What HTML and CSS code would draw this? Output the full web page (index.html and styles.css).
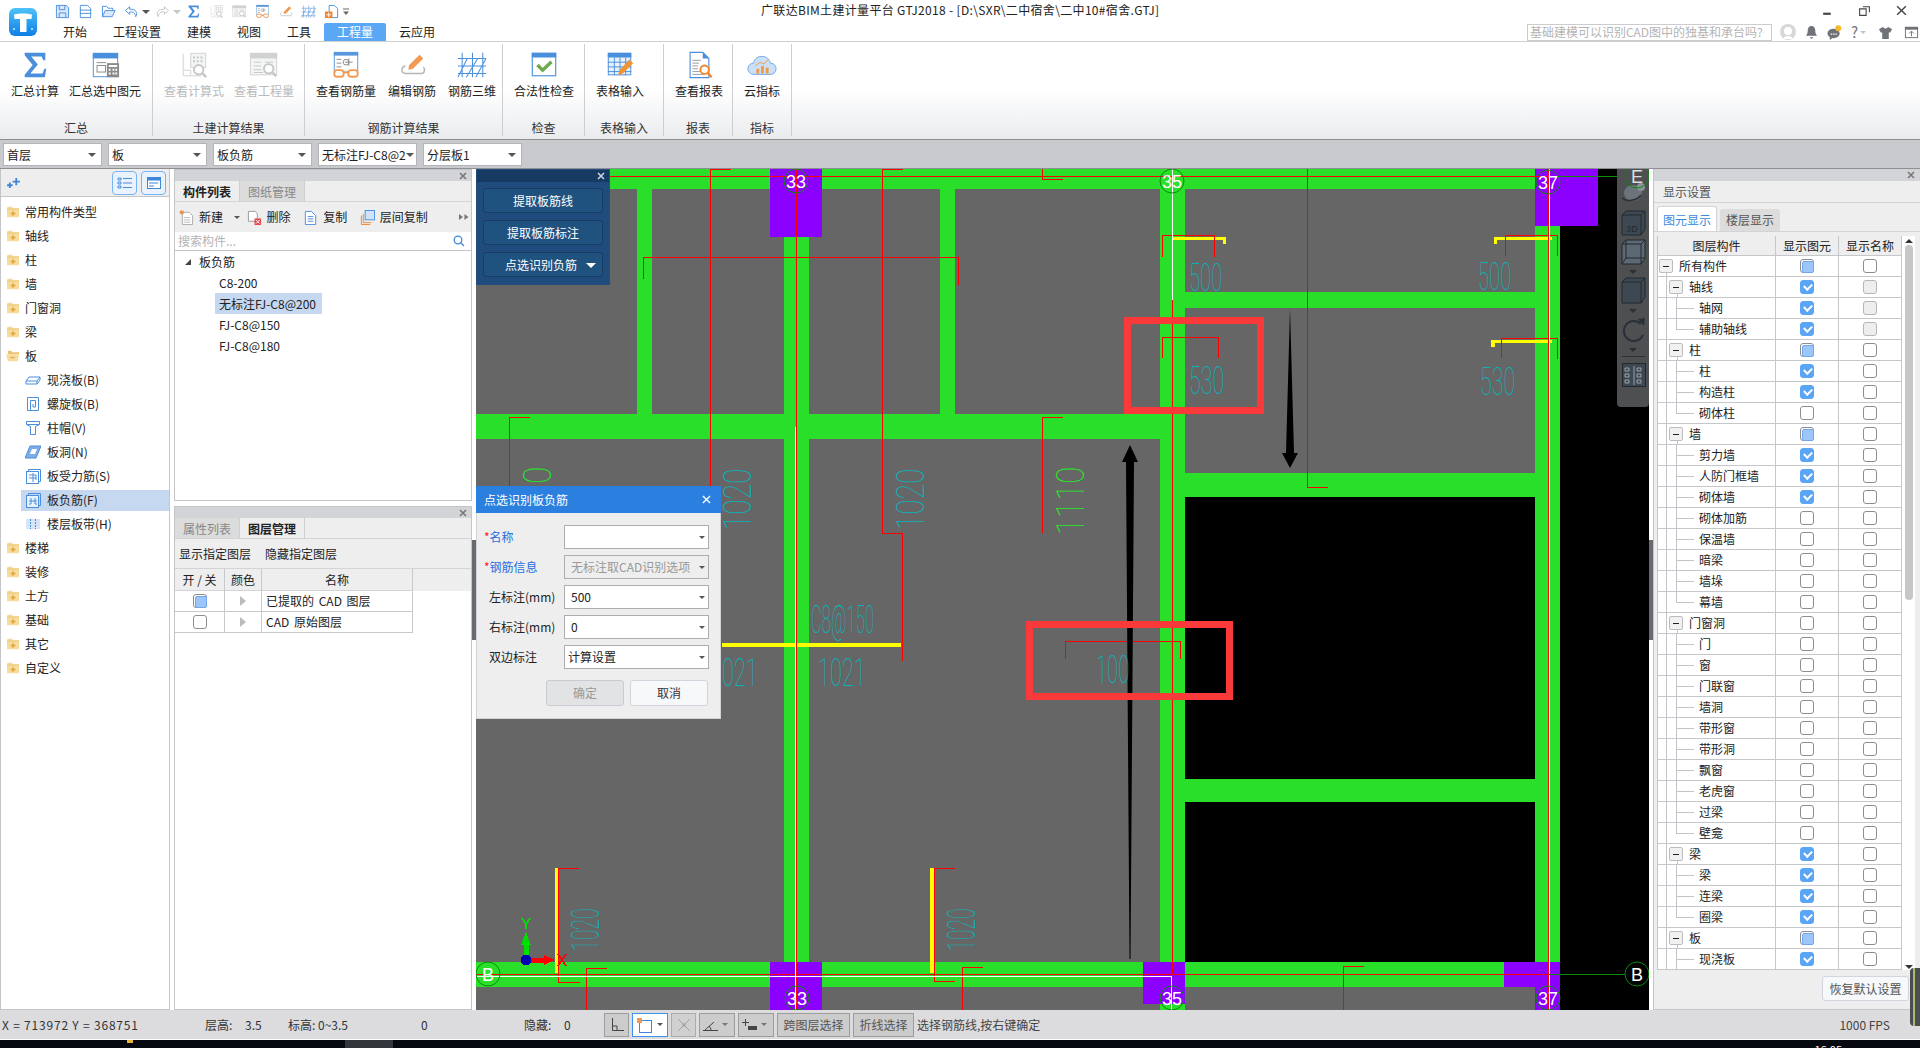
FILE: index.html
```html
<!DOCTYPE html>
<html lang="zh-CN">
<head>
<meta charset="utf-8">
<title>广联达BIM土建计量平台 GTJ2018</title>
<link rel="stylesheet" href="styles.css">
</head>
<body>
<svg class="defs" xmlns="http://www.w3.org/2000/svg">
  <symbol id="s-sigma" viewBox="0 0 32 32"><path d="M5 3H27V11H25L23 7H12L19 15.500L11 25H24L26 20H28L26.500 29H5V26.500L13.500 16L5 5.500Z" fill="#4a8fdc"/></symbol>
  <symbol id="s-sel" viewBox="0 0 32 32"><rect x="3.500" y="4.500" width="26" height="24" fill="#fff" stroke="#4a8fdc"/><rect x="3" y="3" width="27" height="6" fill="#4a8fdc"/><rect x="7.500" y="16.500" width="9" height="7" fill="none" stroke="#8a8a8a"/><rect x="7" y="13" width="10" height="1" fill="#8a8a8a"/><rect x="18" y="14" width="13" height="15" fill="#8a8a8a"/><path d="M20 16h9v2h-9zM20 20h2v2h-2zM24 20h2v2h-2zM27 20h2v2h-2zM20 24h2v2h-2zM24 24h2v2h-2zM27 24h2v2h-2z" fill="#fff"/></symbol>
  <symbol id="s-formula" viewBox="0 0 32 32"><path d="M4.500 4V27.500H24" fill="none" stroke="#cfd1d3"/><path d="M4.500 21.500H12.500V27" fill="none" stroke="#cfd1d3"/><rect x="12.500" y="3.500" width="16" height="15" fill="#f4f5f5" stroke="#cfd1d3"/><path d="M15 7h2v2h-2zM19 7h2v2h-2zM23 7h2v2h-2zM15 11h2v2h-2zM19 11h2v2h-2zM23 11h2v2h-2z" fill="#c4c6c8"/><circle cx="21" cy="21" r="5" fill="#fff" stroke="#c4c6c8" stroke-width="2"/><path d="M25 25L29 29" stroke="#c4c6c8" stroke-width="2.500"/></symbol>
  <symbol id="s-qty" viewBox="0 0 32 32"><rect x="1.500" y="4.500" width="28" height="22" fill="#f4f5f5" stroke="#cfd1d3"/><rect x="1" y="3" width="29" height="6" fill="#cfd1d3"/><path d="M5 13H13M17 13H26M5 17H13M5 21H13M5 24H15" stroke="#c4c6c8"/><circle cx="21" cy="20" r="5" fill="#fff" stroke="#c4c6c8" stroke-width="2"/><path d="M25 24L29 28" stroke="#c4c6c8" stroke-width="2.500"/></symbol>
  <symbol id="s-glasses" viewBox="0 0 32 32"><rect x="3.500" y="3.500" width="25" height="20" fill="#fff" stroke="#5a96dc"/><rect x="3" y="2" width="26" height="4" fill="#5a96dc"/><path d="M6 10H11M6 14H11M6 18H11M15 13H23M19 9V17" stroke="#888"/><circle cx="16" cy="13" r="3" fill="none" stroke="#888"/><rect x="3.500" y="21.500" width="10" height="7" rx="3" fill="#fff" stroke="#f29a53" stroke-width="2"/><rect x="18.500" y="21.500" width="10" height="7" rx="3" fill="#fff" stroke="#f29a53" stroke-width="2"/><path d="M13 24H19" stroke="#f29a53" stroke-width="2"/></symbol>
  <symbol id="s-pen" viewBox="0 0 32 32"><path d="M9 17C4 18 4 25 9 25H26C30 25 30 20 28 18" fill="none" stroke="#b4b6b8" stroke-width="1.500"/><path d="M24 5L28 9L17 20L12 21L13 16Z" fill="#f29a53"/></symbol>
  <symbol id="s-grid" viewBox="0 0 32 32"><path d="M5.500 3V29M16.500 3V29M27.500 3V29M1 9H31M1 17H31M1 25H31M1 29L11 9M10 29L22 9M20 29L31 9" fill="none" stroke="#4a8fdc" stroke-width="1.100"/></symbol>
  <symbol id="s-check" viewBox="0 0 32 32"><rect x="3.500" y="3.500" width="25" height="24" fill="#fff" stroke="#4a8fdc" stroke-width="1.200"/><rect x="3" y="3" width="26" height="5" fill="#4a8fdc"/><path d="M9 16L14.500 21.500L24 12.500" fill="none" stroke="#6ea94b" stroke-width="3.500"/></symbol>
  <symbol id="s-table" viewBox="0 0 32 32"><rect x="3.500" y="3.500" width="24" height="23" fill="#e8f0fa" stroke="#4a8fdc"/><rect x="3" y="3" width="25" height="5" fill="#4a8fdc"/><path d="M3 13H28M3 18H28M3 23H28M10 8V27M16 8V27M22 8V27" stroke="#4a8fdc"/><path d="M26 10L30 14L19 25L14 27L15.500 21.500Z" fill="#f09331"/></symbol>
  <symbol id="s-report" viewBox="0 0 32 32"><path d="M6.500 2.500H20L26.500 9V29.500H6.500Z" fill="#fff" stroke="#4a8fdc" stroke-width="1.200"/><path d="M20 2L27 9H20Z" fill="#4a8fdc"/><path d="M9 11H18M9 14H16M9 17H15M9 20H15M9 23H17M9 26H21" stroke="#999"/><circle cx="22" cy="21" r="4.500" fill="#fff" stroke="#f0852d" stroke-width="2"/><path d="M25.500 24.500L29.500 29" stroke="#f0852d" stroke-width="2.500"/></symbol>
  <symbol id="s-cloud" viewBox="0 0 32 32"><path d="M8 26C3 26 1 23 1 20C1 16 4 14 7 14C8 9 12 6 17 7C21 7 24 10 25 14C29 14 31 17 31 20C31 24 28 26 25 26Z" fill="#c9e0f7" stroke="#6ea6e0"/><path d="M10 20h3v5h-3zM15 17h3v8h-3zM20 19h3v6h-3z" fill="#f09a45"/><path d="M9 17L14 13L18 15L23 10" fill="none" stroke="#f09a45"/></symbol>
  <symbol id="s-folder" viewBox="0 0 16 14"><path d="M1 2.500C1 1.500 2 1 3 1H7L8 2.500H15V13H1Z" fill="#f6dc9d"/><path d="M1 3H15V4H1Z" fill="#e9c272"/><path d="M7 6h2v2h2v1.500H9v2H7v-2H5V8h2z" fill="#eaa640"/></symbol>
  <symbol id="s-folder-open" viewBox="0 0 16 14"><path d="M2 1H6L7 2.500H15V5H2Z" fill="#e9c272"/><path d="M0 5H15L13.500 13H2Z" fill="#f6dc9d"/><path d="M5 8H10V9.500H5Z" fill="#e1a84c"/></symbol>
  <symbol id="s-x" viewBox="0 0 8 8"><path d="M1 1L7 7M7 1L1 7"/></symbol>
</svg>

<div class="app">
  <header class="top">
    <div class="logo-cell">
      <svg class="logo" viewBox="0 0 28 28"><defs><linearGradient id="lg" x1="0" y1="0" x2="0" y2="1"><stop offset="0" stop-color="#4ec2f8"/><stop offset="1" stop-color="#0f7fe6"/></linearGradient></defs><rect width="28" height="28" rx="6" fill="url(#lg)"/><path d="M5 6.500C9 5 19 5 23 6.500L22.500 11H17.500V24H11V11H5.500Z" fill="#fff"/><path d="M4 20h2v2H4zM22 20h2v2h-2z" fill="#9bdcff"/></svg>
    </div>
    <div class="top-main">
      <div class="title-row">
        <div class="qat">
          <svg class="qi" viewBox="0 0 16 16"><path d="M1.500 1.500H12L14.500 4V14.500H1.500Z" fill="#d9e9fb" stroke="#4a8fdc"/><path d="M4.500 2V6H10.500V2M4.500 14V9.500H11.500V14" fill="none" stroke="#4a8fdc"/></svg>
          <svg class="qi" viewBox="0 0 16 16"><path d="M2.500 1.500H10L13.500 5V14.500H2.500Z" fill="#fff" stroke="#4a8fdc"/><path d="M2 6.500H14M2 10H14" stroke="#4a8fdc"/></svg>
          <svg class="qi" viewBox="0 0 16 16"><path d="M1.500 13.500V2.500H6L7.500 4.500H12.500V7" fill="#fff" stroke="#4a8fdc"/><path d="M1.500 13.500L4.500 7H15L12 13.500Z" fill="#d9e9fb" stroke="#4a8fdc"/></svg>
          <svg class="qi" viewBox="0 0 16 16"><path d="M6 3L1.500 7L6 11V8.500C10 8 12 10 12.500 13.500C15 9 13 5.500 6 5.500Z" fill="#fff" stroke="#4a8fdc"/></svg>
          <i class="caret dark"></i>
          <svg class="qi" viewBox="0 0 16 16"><path d="M10 3L14.500 7L10 11V8.500C6 8 4 10 3.500 13.500C1 9 3 5.500 10 5.500Z" fill="#fff" stroke="#c2c4c6"/></svg>
          <i class="caret pale"></i>
          <svg class="qi"><use href="#s-sigma"/></svg>
          <svg class="qi"><use href="#s-formula"/></svg>
          <svg class="qi"><use href="#s-qty"/></svg>
          <svg class="qi"><use href="#s-glasses"/></svg>
          <svg class="qi"><use href="#s-pen"/></svg>
          <svg class="qi"><use href="#s-grid"/></svg>
          <svg class="qi" viewBox="0 0 16 16"><path d="M5.500 1.500H11L14.500 5V14.500H5.500Z" fill="#fff" stroke="#4a8fdc"/><rect x="1" y="8" width="8" height="7" fill="#f0852d"/><path d="M5 9V14M2.500 11.500H7.500" stroke="#fff"/></svg>
          <svg class="qmore" viewBox="0 0 8 8"><path d="M1 1H7" stroke="#666"/><path d="M1 3.500H7L4 7Z" fill="#666"/></svg>
        </div>
        <div class="app-title">广联达BIM土建计量平台 GTJ2018 - [D:\SXR\二中宿舍\二中10#宿舍.GTJ]</div>
        <div class="winctl">
          <svg class="wc" viewBox="0 0 12 12"><path d="M2 9H9" stroke="#444" stroke-width="2"/></svg>
          <svg class="wc" viewBox="0 0 12 12"><path d="M4.500 2.500H10.500V7.500M1.500 4.500H7.500V10.500H1.500Z" fill="none" stroke="#444"/></svg>
          <svg class="wc" viewBox="0 0 12 12"><path d="M2 2L10 10M10 2L2 10" stroke="#444" stroke-width="1.300"/></svg>
        </div>
      </div>
      <div class="tab-row">
        <nav class="tabs">
          <span class="tab">开始</span><span class="tab">工程设置</span><span class="tab">建模</span><span class="tab">视图</span><span class="tab">工具</span><span class="tab active">工程量</span><span class="tab">云应用</span>
        </nav>
        <div class="user-tools">
          <div class="search"><span class="ph">基础建模可以识别CAD图中的独基和承台吗?</span>
            <svg class="sico" viewBox="0 0 12 12"><circle cx="5" cy="5" r="3.800" fill="none" stroke="#bbb"/><path d="M8 8L11 11" stroke="#bbb"/></svg></div>
          <svg class="ut avatar" viewBox="0 0 16 16"><circle cx="8" cy="8" r="8" fill="#d6d8da"/><circle cx="8" cy="7" r="4" fill="#fff"/><path d="M3 15C4 11 12 11 13 15" fill="#fff"/></svg>
          <svg class="ut" viewBox="0 0 16 16"><path d="M8 1C5 1 4 3.500 4 6C4 9 3 10 2 11.500H14C13 10 12 9 12 6C12 3.500 11 1 8 1ZM6 13H10L8 15Z" fill="#6f7377"/></svg>
          <svg class="ut" viewBox="0 0 16 16"><ellipse cx="7" cy="9" rx="6.500" ry="5" fill="#6f7377"/><path d="M3 12L3 16L7 13Z" fill="#6f7377"/><path d="M4 9h1.500v1.500H4zM6.500 9H8v1.500H6.500zM9 9h1.500v1.500H9z" fill="#fff"/><circle cx="12" cy="3.500" r="3.200" fill="#f5b82e"/></svg>
          <span class="help">?</span><i class="caret pale"></i>
          <svg class="ut shirt" viewBox="0 0 16 16"><path d="M5 2L1 4.500L3 8H4.500V15H11.500V8H13L15 4.500L11 2L8 4Z" fill="#6f7377"/></svg>
          <svg class="ut" viewBox="0 0 16 16"><rect x="1.500" y="2.500" width="13" height="11" fill="#fff" stroke="#6f7377"/><rect x="1" y="2" width="14" height="3" fill="#6f7377"/><path d="M8 12V7M5.500 9L8 6.500L10.500 9" fill="none" stroke="#6f7377"/></svg>
        </div>
      </div>
    </div>
  </header>

  <section class="ribbon">
    <div class="grp g1"><div class="items">
      <div class="item"><svg class="ric"><use href="#s-sigma"/></svg><span>汇总计算</span></div>
      <div class="item"><svg class="ric"><use href="#s-sel"/></svg><span>汇总选中图元</span></div>
    </div><div class="gl">汇总</div></div>
    <div class="grp g2"><div class="items">
      <div class="item off"><svg class="ric"><use href="#s-formula"/></svg><span>查看计算式</span></div>
      <div class="item off"><svg class="ric"><use href="#s-qty"/></svg><span>查看工程量</span></div>
    </div><div class="gl">土建计算结果</div></div>
    <div class="grp g3"><div class="items wide">
      <div class="item"><svg class="ric"><use href="#s-glasses"/></svg><span>查看钢筋量</span></div>
      <div class="item"><svg class="ric"><use href="#s-pen"/></svg><span>编辑钢筋</span></div>
      <div class="item"><svg class="ric"><use href="#s-grid"/></svg><span>钢筋三维</span></div>
    </div><div class="gl">钢筋计算结果</div></div>
    <div class="grp g4"><div class="items">
      <div class="item"><svg class="ric"><use href="#s-check"/></svg><span>合法性检查</span></div>
    </div><div class="gl">检查</div></div>
    <div class="grp g5"><div class="items">
      <div class="item"><svg class="ric"><use href="#s-table"/></svg><span>表格输入</span></div>
    </div><div class="gl">表格输入</div></div>
    <div class="grp g6"><div class="items">
      <div class="item"><svg class="ric"><use href="#s-report"/></svg><span>查看报表</span></div>
    </div><div class="gl">报表</div></div>
    <div class="grp g7"><div class="items">
      <div class="item"><svg class="ric"><use href="#s-cloud"/></svg><span>云指标</span></div>
    </div><div class="gl">指标</div></div>
  </section>

  <section class="combos">
    <div class="combo"><span>首层</span><i class="caret dark"></i></div>
    <div class="combo"><span>板</span><i class="caret dark"></i></div>
    <div class="combo"><span>板负筋</span><i class="caret dark"></i></div>
    <div class="combo"><span class="clip">无标注FJ-C8@2</span><i class="caret dark"></i></div>
    <div class="combo"><span>分层板1</span><i class="caret dark"></i></div>
  </section>

  <main class="main">
    <aside class="side">
      <div class="side-bar">
        <svg class="spark" viewBox="0 0 14 12"><path d="M9 1h2v3h3v2h-3v3H9V6H6V4h3zM2 6h2v2h2v2H4v2H2v-2H0V8h2z" fill="#3d86d8"/></svg>
        <span class="vbtn"><svg viewBox="0 0 16 16"><path d="M1 3h3v2H1zM1 7h3v2H1zM1 11h3v2H1z" fill="none" stroke="#4a8fdc"/><path d="M6 3.500H15M6 8H15M6 12.500H15" stroke="#4a8fdc"/></svg></span>
        <span class="vbtn"><svg viewBox="0 0 16 16"><rect x="1.500" y="2.500" width="13" height="11" fill="#fff" stroke="#3d86d8"/><rect x="1" y="2" width="14" height="3.500" fill="#3d86d8"/><path d="M3 8H12M3 11H8" stroke="#3d86d8"/></svg></span>
      </div>
      <div class="side-tree">
        <div class="nd"><svg class="fo"><use href="#s-folder"/></svg>常用构件类型</div>
        <div class="nd"><svg class="fo"><use href="#s-folder"/></svg>轴线</div>
        <div class="nd"><svg class="fo"><use href="#s-folder"/></svg>柱</div>
        <div class="nd"><svg class="fo"><use href="#s-folder"/></svg>墙</div>
        <div class="nd"><svg class="fo"><use href="#s-folder"/></svg>门窗洞</div>
        <div class="nd"><svg class="fo"><use href="#s-folder"/></svg>梁</div>
        <div class="nd"><svg class="fo"><use href="#s-folder-open"/></svg>板</div>
        <div class="nd sub"><svg class="ti" viewBox="0 0 16 16"><path d="M1 9L4 5H15L12 9ZM1 9V12H12V9M12 12L15 8V5" fill="#fff" stroke="#4a8fdc"/></svg>现浇板(B)</div>
        <div class="nd sub"><svg class="ti" viewBox="0 0 16 16"><path d="M2.500 1.500H13.500V14.500H2.500ZM5.500 14V4.500H10.500V11H8V8" fill="none" stroke="#4a8fdc"/></svg>螺旋板(B)</div>
        <div class="nd sub"><svg class="ti" viewBox="0 0 16 16"><path d="M1.500 1.500H14.500V4.500L10.500 6.500V14.500H5.500V6.500L1.500 4.500Z" fill="none" stroke="#4a8fdc"/><path d="M2 4.500H14" stroke="#4a8fdc"/></svg>柱帽(V)</div>
        <div class="nd sub"><svg class="ti" viewBox="0 0 16 16"><path d="M5 2H16L11 14H0Z" fill="#7eaee6" stroke="#4a8fdc"/><path d="M7 5H12L10 10H5Z" fill="#fff"/></svg>板洞(N)</div>
        <div class="nd sub"><svg class="ti" viewBox="0 0 16 16"><rect x="1.500" y="3.500" width="12" height="12" fill="#fff" stroke="#4a8fdc"/><path d="M3.500 3V1.500H15.500V13.500H14M4 7H11V12M4 10H11M8 5V14" fill="none" stroke="#4a8fdc"/></svg>板受力筋(S)</div>
        <div class="nd sub sel"><svg class="ti" viewBox="0 0 16 16"><rect x="1.500" y="3.500" width="12" height="12" fill="#e8f0fa" stroke="#4a8fdc"/><path d="M3.500 3V1.500H15.500V13.500H14M6 6V12H4M10 6V12H12M4 9H12" fill="none" stroke="#4a8fdc"/></svg>板负筋(F)</div>
        <div class="nd sub"><svg class="ti" viewBox="0 0 16 16"><rect x="1" y="3" width="14" height="10" fill="#d6e5f7"/><path d="M5.500 3V13M10.500 3V13" stroke="#4a8fdc" stroke-dasharray="2 1"/></svg>楼层板带(H)</div>
        <div class="nd"><svg class="fo"><use href="#s-folder"/></svg>楼梯</div>
        <div class="nd"><svg class="fo"><use href="#s-folder"/></svg>装修</div>
        <div class="nd"><svg class="fo"><use href="#s-folder"/></svg>土方</div>
        <div class="nd"><svg class="fo"><use href="#s-folder"/></svg>基础</div>
        <div class="nd"><svg class="fo"><use href="#s-folder"/></svg>其它</div>
        <div class="nd"><svg class="fo"><use href="#s-folder"/></svg>自定义</div>
      </div>
    </aside>

    <div class="gap"></div>

    <div class="mid">
      <section class="pane pane-top">
        <div class="pane-head"><svg class="xi"><use href="#s-x"/></svg></div>
        <div class="ptabs"><span class="ptab on">构件列表</span><span class="ptab">图纸管理</span></div>
        <div class="ptool">
          <span class="pt p-new"><svg class="pi" viewBox="0 0 16 16"><path d="M3.500 2.500H11L14.500 6V15.500H3.500Z" fill="#fff" stroke="#aaa"/><path d="M5 8H12M5 10.500H12M5 13H12" stroke="#bbb"/><path d="M3 0V5M0.500 2.500H5.500M1 1L5 4M5 1L1 4" stroke="#f0852d"/></svg>新建<i class="caret dark"></i></span>
          <span class="pt p-del"><svg class="pi" viewBox="0 0 16 16"><path d="M1.500 1.500H9L11 4V12H1.500Z" fill="#fff" stroke="#999"/><rect x="8" y="9" width="7" height="7" fill="#e84a4a"/><path d="M9.500 10.500L13.500 14.500M13.500 10.500L9.500 14.500" stroke="#fff"/></svg>删除</span>
          <span class="pt p-copy"><svg class="pi" viewBox="0 0 16 16"><path d="M2.500 1.500H9L13.500 6V15.500H2.500Z" fill="#fff" stroke="#4a8fdc"/><path d="M5 7H11M5 9.500H11M5 12H11" stroke="#4a8fdc"/></svg>复制</span>
          <span class="pt p-floor"><svg class="pi" viewBox="0 0 16 16"><path d="M1.500 6V15.500H11M3.500 4V13.500H12" fill="none" stroke="#f0852d"/><rect x="5.500" y="0.500" width="10" height="10" fill="#cfe2f9" stroke="#4a8fdc"/></svg>层间复制</span>
          <svg class="more" viewBox="0 0 10 8"><path d="M0 1L4 4L0 7ZM5.500 1L9.500 4L5.500 7Z" fill="#777"/></svg>
        </div>
        <div class="psearch"><span class="ph">搜索构件...</span><svg class="sico2" viewBox="0 0 12 12"><circle cx="5" cy="5" r="3.800" fill="none" stroke="#3d86d8" stroke-width="1.300"/><path d="M8 8L11 11" stroke="#3d86d8" stroke-width="1.300"/></svg></div>
        <div class="ltree">
          <div class="lh"><i class="tri"></i>板负筋</div>
          <div class="li">C8-200</div>
          <div class="li sel">无标注FJ-C8@200</div>
          <div class="li">FJ-C8@150</div>
          <div class="li">FJ-C8@180</div>
        </div>
      </section>
      <section class="pane pane-bot">
        <div class="pane-head"><svg class="xi"><use href="#s-x"/></svg></div>
        <div class="ptabs"><span class="ptab">属性列表</span><span class="ptab on">图层管理</span></div>
        <div class="layerbar"><span>显示指定图层</span><span>隐藏指定图层</span></div>
        <div class="lrow lhead"><span class="c1">开 / 关</span><span class="c2">颜色</span><span class="c3">名称</span></div>
        <div class="lrow"><span class="c1"><i class="cb part"></i></span><span class="c2"><i class="play"></i></span><span class="c3 tl">已提取的 CAD 图层</span></div>
        <div class="lrow"><span class="c1"><i class="cb"></i></span><span class="c2"><i class="play"></i></span><span class="c3 tl">CAD 原始图层</span></div>
      </section>
    </div>

    <div class="split"><i></i></div>

    <div class="canvas">
      <svg class="draw" viewBox="476 169 1173 841" xmlns="http://www.w3.org/2000/svg">
        <rect x="476" y="169" width="1173" height="841" fill="#666"/>
        <rect x="1560" y="169" width="89" height="841" fill="#000"/>
        <rect x="1185" y="497" width="350" height="282" fill="#000"/>
        <rect x="1185" y="802" width="350" height="160" fill="#000"/>
        <g fill="#2adf2a">
          <rect x="476" y="169" width="1059" height="20"/>
          <rect x="637" y="189" width="15" height="225"/>
          <rect x="784" y="237" width="25" height="725"/>
          <rect x="940" y="189" width="15" height="225"/>
          <rect x="1160" y="169" width="25" height="841"/>
          <rect x="476" y="414" width="684" height="25"/>
          <rect x="1185" y="292" width="350" height="16"/>
          <rect x="1185" y="473" width="350" height="24"/>
          <rect x="1185" y="779" width="350" height="23"/>
          <rect x="1535" y="226" width="25" height="736"/>
          <rect x="476" y="962" width="1040" height="25"/>
        </g>
        <g fill="#8c00ff">
          <rect x="770" y="169" width="52" height="68"/>
          <rect x="1535" y="169" width="63" height="57"/>
          <rect x="770" y="962" width="52" height="48"/>
          <rect x="1143" y="962" width="42" height="42"/>
          <rect x="1504" y="962" width="56" height="25"/>
          <rect x="1535" y="987" width="25" height="23"/>
        </g>
        <g class="yl">
          <path d="M1173 238.500H1224.500V244"/>
          <path d="M1552 238.500H1495.500V244"/>
          <path d="M1552 341.500H1493V347"/>
          <path d="M722 645H901"/>
          <path d="M557 868V973"/>
          <path d="M932 868V973"/>
        </g>
        <g class="rd">
          <path d="M476 176.500H1548M476 974.500H1548"/>
          <path d="M796.500 169V1010M1172.500 300V975M1548.500 169V1010"/>
          <path d="M731 169.500H710.500V490"/>
          <path d="M903 169.500H882.500V533.500H902.500V661"/>
          <path d="M643.500 279V257.500H958.500V285"/>
          <path d="M530 417.500H509.500V486"/>
          <path d="M1063 179.500H1042.500V169"/>
          <path d="M1063 417.500H1042.500V533"/>
          <path d="M1307.500 169V487.500H1328"/>
          <path d="M1162.500 257V235.500H1214.500V257"/>
          <path d="M1505.500 256V235.500H1557.500V256"/>
          <path d="M1162.500 358V337.500H1218.500V358"/>
          <path d="M1501.500 358V338.500H1557.500V359"/>
          <path d="M1065.500 659V641.500H1180.500V659"/>
          <path d="M579 868.500H558.500V982.500H580"/>
          <path d="M955 868.500H934.500V981.500H955"/>
          <path d="M607 968.500H586.500V1010"/>
          <path d="M983 967.500H962.500V1010"/>
          <path d="M1364 966.500H1343.500V1010"/>
        </g>
        <g class="wh">
          <path d="M1172.500 169V300M795.500 427V1010M476 976.500H1171.500V1010M1549.500 169V1010"/>
        </g>
        <path class="gl1" d="M1549 176.500H1625M1549 974.500H1625"/>
        <g class="arrows">
          <path d="M1130 445L1138 462H1134L1130.500 959H1129.500L1126 462H1122Z"/>
          <path d="M1290 309L1294 453H1298L1290 468L1282 453H1286Z"/>
        </g>
        <g class="box">
          <rect x="1127.500" y="320.500" width="133" height="90"/>
          <rect x="1029.500" y="624.500" width="200" height="72"/>
        </g>
        <g class="cad">
          <text transform="translate(1189 291) scale(.52 1)">500</text>
          <text transform="translate(1478 290) scale(.52 1)">500</text>
          <text transform="translate(1189 394) scale(.55 1)">530</text>
          <text transform="translate(1480 395) scale(.55 1)">530</text>
          <text transform="translate(599 951) rotate(-90) scale(.5 1)">1020</text>
          <text transform="translate(975 951) rotate(-90) scale(.5 1)">1020</text>
          <text transform="translate(751 530) rotate(-90) scale(.72 1)">1020</text>
          <text transform="translate(924 530) rotate(-90) scale(.72 1)">1020</text>
          <text transform="translate(811 633) scale(.43 1)">C8@150</text>
          <text transform="translate(818 686) scale(.56 1)">1021</text>
          <text transform="translate(722 686) scale(.56 1)">021</text>
          <text transform="translate(1096 683) scale(.52 1)">100</text>
        </g>
        <g class="cad lime">
          <text transform="translate(1084 535) rotate(-90) scale(.8 1)">1110</text>
          <text transform="translate(551 535) rotate(-90) scale(.8 1)">1010</text>
        </g>
        <g class="axc">
          <circle cx="796" cy="181" r="12"/><circle cx="1172" cy="181" r="12"/><circle cx="1548" cy="182" r="12"/>
          <circle cx="797" cy="998" r="12"/><circle cx="1172" cy="998" r="12"/><circle cx="1548" cy="998" r="12"/>
          <circle cx="488" cy="974" r="12"/><circle cx="1637" cy="974" r="12"/>
        </g>
        <g class="axt">
          <text x="796" y="188">33</text><text x="1172" y="188">35</text><text x="1548" y="189">37</text>
          <text x="797" y="1005">33</text><text x="1172" y="1005">35</text><text x="1548" y="1005">37</text>
          <text x="488" y="981">B</text><text x="1637" y="981">B</text>
        </g>
        <path d="M526 960V945" stroke="#00e000" stroke-width="5"/>
        <path d="M526 932L521 945H531Z" fill="#00e000"/>
        <path d="M526 960H546" stroke="#f00" stroke-width="5"/>
        <path d="M555 960L544 955V965Z" fill="#f00"/>
        <circle cx="526" cy="960" r="5.500" fill="#0000b0"/>
        <path d="M522 918L526 924L530 918M526 924V929" fill="none" stroke="#00e000" stroke-width="1.500"/>
        <path d="M558 954L566 966M566 954L558 966" stroke="#f00" stroke-width="1.500"/>
      </svg>

      <div class="viewbar">
        <svg class="vb-svg" viewBox="0 0 32 238">
          <ellipse cx="16" cy="24" rx="9" ry="8" fill="#6c747b"/>
          <circle cx="24" cy="18" r="4" fill="#8c9298"/>
          <path d="M5 29C9 33 20 32 24 26" fill="none" stroke="#2a3038" stroke-width="1.500"/>
          <g class="cube"><path d="M5 46L9 42H28V60L24 66H5Z"/><path d="M5 46H24V66M24 46L28 42" fill="none"/></g>
          <text class="t3d" x="15" y="63">3D</text>
          <g class="cube glass"><path d="M5 75L9 71H28V89L24 95H5Z"/><path d="M5 75H24V95M24 75L28 71M9 71V89H28M9 89L5 95" fill="none"/></g>
          <g class="cube"><path d="M5 113L9 109H28V128L24 134H5Z"/><path d="M5 113H24V134M24 113L28 109" fill="none"/></g>
          <path d="M24 155A10 10 0 1 0 26 166" fill="none" stroke="#2a3038" stroke-width="2"/>
          <path d="M21 150L28 149L27 157Z" fill="#2a3038"/>
          <path d="M12 101H20L16 105ZM12 140H20L16 144ZM12 179H20L16 183Z" fill="#2a3038"/>
          <path d="M5 187.500H28" stroke="#2a3038"/>
          <g class="cube"><rect x="5.500" y="194.500" width="23" height="23"/>
          <path d="M8 199h4v3H8zM8 205h4v3H8zM8 211h4v3H8zM20 199h4v3h-4zM20 205h4v3h-4zM20 211h4v3h-4zM17 197V216" fill="none" stroke="#9aa2a9"/></g>
          <circle class="ecirc" cx="20" cy="7" r="12"/>
          <text class="etxt" x="20" y="14">E</text>
        </svg>
      </div>

      <div class="floatp">
        <div class="fh"><svg class="xi lite"><use href="#s-x"/></svg></div>
        <div class="fb">提取板筋线</div>
        <div class="fb">提取板筋标注</div>
        <div class="fb"><span>点选识别负筋</span><i class="caret white"></i></div>
      </div>

      <div class="dlg">
        <div class="dh"><span>点选识别板负筋</span><svg class="dx" viewBox="0 0 10 10"><path d="M1 1L9 9M9 1L1 9" stroke="#fff" stroke-width="1.500"/></svg></div>
        <div class="db">
          <div class="dr"><label class="req"><em>*</em>名称</label><div class="fld"><span></span><i class="caret dark"></i></div></div>
          <div class="dr"><label class="req"><em>*</em>钢筋信息</label><div class="fld dim"><span>无标注取CAD识别选项</span><i class="caret dark"></i></div></div>
          <div class="dr"><label>左标注(mm)</label><div class="fld"><span>500</span><i class="caret dark"></i></div></div>
          <div class="dr"><label>右标注(mm)</label><div class="fld"><span>0</span><i class="caret dark"></i></div></div>
          <div class="dr"><label>双边标注</label><div class="fld tight"><span>计算设置</span><i class="caret dark"></i></div></div>
          <div class="dbtns"><span class="btn no">确定</span><span class="btn">取消</span></div>
        </div>
      </div>
    </div>

    <div class="split"><i></i></div>

    <aside class="right">
      <div class="pane-head"><svg class="xi"><use href="#s-x"/></svg></div>
      <div class="rt-title">显示设置</div>
      <div class="rt-tabs"><span class="rtab on">图元显示</span><span class="rtab">楼层显示</span></div>
      <div class="rt-body">
        <div class="tbl">
          <div class="r rh"><div class="c0">图层构件</div><div class="ck">显示图元</div><div class="ck">显示名称</div></div>
          <div class="r"><div class="c0 l0 first"><i class="ex"></i>所有构件</div><div class="ck"><i class="cb part"></i></div><div class="ck"><i class="cb"></i></div></div>
          <div class="r"><div class="c0 l1"><i class="ex"></i>轴线</div><div class="ck"><i class="cb on"></i></div><div class="ck"><i class="cb dis"></i></div></div>
          <div class="r"><div class="c0 l2">轴网</div><div class="ck"><i class="cb on"></i></div><div class="ck"><i class="cb dis"></i></div></div>
          <div class="r"><div class="c0 l2 end">辅助轴线</div><div class="ck"><i class="cb on"></i></div><div class="ck"><i class="cb dis"></i></div></div>
          <div class="r"><div class="c0 l1"><i class="ex"></i>柱</div><div class="ck"><i class="cb part"></i></div><div class="ck"><i class="cb"></i></div></div>
          <div class="r"><div class="c0 l2">柱</div><div class="ck"><i class="cb on"></i></div><div class="ck"><i class="cb"></i></div></div>
          <div class="r"><div class="c0 l2">构造柱</div><div class="ck"><i class="cb on"></i></div><div class="ck"><i class="cb"></i></div></div>
          <div class="r"><div class="c0 l2 end">砌体柱</div><div class="ck"><i class="cb"></i></div><div class="ck"><i class="cb"></i></div></div>
          <div class="r"><div class="c0 l1"><i class="ex"></i>墙</div><div class="ck"><i class="cb part"></i></div><div class="ck"><i class="cb"></i></div></div>
          <div class="r"><div class="c0 l2">剪力墙</div><div class="ck"><i class="cb on"></i></div><div class="ck"><i class="cb"></i></div></div>
          <div class="r"><div class="c0 l2">人防门框墙</div><div class="ck"><i class="cb on"></i></div><div class="ck"><i class="cb"></i></div></div>
          <div class="r"><div class="c0 l2">砌体墙</div><div class="ck"><i class="cb on"></i></div><div class="ck"><i class="cb"></i></div></div>
          <div class="r"><div class="c0 l2">砌体加筋</div><div class="ck"><i class="cb"></i></div><div class="ck"><i class="cb"></i></div></div>
          <div class="r"><div class="c0 l2">保温墙</div><div class="ck"><i class="cb"></i></div><div class="ck"><i class="cb"></i></div></div>
          <div class="r"><div class="c0 l2">暗梁</div><div class="ck"><i class="cb"></i></div><div class="ck"><i class="cb"></i></div></div>
          <div class="r"><div class="c0 l2">墙垛</div><div class="ck"><i class="cb"></i></div><div class="ck"><i class="cb"></i></div></div>
          <div class="r"><div class="c0 l2 end">幕墙</div><div class="ck"><i class="cb"></i></div><div class="ck"><i class="cb"></i></div></div>
          <div class="r"><div class="c0 l1"><i class="ex"></i>门窗洞</div><div class="ck"><i class="cb"></i></div><div class="ck"><i class="cb"></i></div></div>
          <div class="r"><div class="c0 l2">门</div><div class="ck"><i class="cb"></i></div><div class="ck"><i class="cb"></i></div></div>
          <div class="r"><div class="c0 l2">窗</div><div class="ck"><i class="cb"></i></div><div class="ck"><i class="cb"></i></div></div>
          <div class="r"><div class="c0 l2">门联窗</div><div class="ck"><i class="cb"></i></div><div class="ck"><i class="cb"></i></div></div>
          <div class="r"><div class="c0 l2">墙洞</div><div class="ck"><i class="cb"></i></div><div class="ck"><i class="cb"></i></div></div>
          <div class="r"><div class="c0 l2">带形窗</div><div class="ck"><i class="cb"></i></div><div class="ck"><i class="cb"></i></div></div>
          <div class="r"><div class="c0 l2">带形洞</div><div class="ck"><i class="cb"></i></div><div class="ck"><i class="cb"></i></div></div>
          <div class="r"><div class="c0 l2">飘窗</div><div class="ck"><i class="cb"></i></div><div class="ck"><i class="cb"></i></div></div>
          <div class="r"><div class="c0 l2">老虎窗</div><div class="ck"><i class="cb"></i></div><div class="ck"><i class="cb"></i></div></div>
          <div class="r"><div class="c0 l2">过梁</div><div class="ck"><i class="cb"></i></div><div class="ck"><i class="cb"></i></div></div>
          <div class="r"><div class="c0 l2 end">壁龛</div><div class="ck"><i class="cb"></i></div><div class="ck"><i class="cb"></i></div></div>
          <div class="r"><div class="c0 l1"><i class="ex"></i>梁</div><div class="ck"><i class="cb on"></i></div><div class="ck"><i class="cb"></i></div></div>
          <div class="r"><div class="c0 l2">梁</div><div class="ck"><i class="cb on"></i></div><div class="ck"><i class="cb"></i></div></div>
          <div class="r"><div class="c0 l2">连梁</div><div class="ck"><i class="cb on"></i></div><div class="ck"><i class="cb"></i></div></div>
          <div class="r"><div class="c0 l2 end">圈梁</div><div class="ck"><i class="cb on"></i></div><div class="ck"><i class="cb"></i></div></div>
          <div class="r"><div class="c0 l1"><i class="ex"></i>板</div><div class="ck"><i class="cb part"></i></div><div class="ck"><i class="cb"></i></div></div>
          <div class="r"><div class="c0 l2">现浇板</div><div class="ck"><i class="cb on"></i></div><div class="ck"><i class="cb"></i></div></div>
        </div>
        <div class="scroll"><i class="up"></i><i class="thumb"></i><i class="down"></i></div>
      </div>
      <div class="rt-foot"><span class="btn reset">恢复默认设置</span></div>
    </aside>
  </main>

  <footer class="status">
    <span class="coords">X = 713972 Y = 368751</span><span>层高:</span><span>3.5</span><span>标高: 0~3.5</span><span>0</span><span>隐藏:</span><span>0</span>
    <div class="sbtns">
      <span class="sb s1"><svg viewBox="0 0 16 16"><path d="M3.500 1V13.500H15M3.500 9H8V13" fill="none" stroke="#444"/></svg></span>
      <span class="sb s2"><svg class="s2a" viewBox="0 0 16 16"><rect x="3.500" y="3.500" width="12" height="12" fill="#fff" stroke="#3d86d8"/><rect x="1" y="1" width="5" height="5" fill="#f29a53"/></svg><i class="caret dark"></i></span>
      <span class="sb s1 dimmed"><svg viewBox="0 0 16 16"><path d="M2 2L14 14M14 2L2 14" stroke="#8f8f8f"/><rect x="6.500" y="6.500" width="3" height="3" fill="#8f8f8f"/></svg></span>
      <span class="sb s3"><svg viewBox="0 0 16 16"><path d="M0 13.500H15M2 13L11 5" stroke="#444"/><path d="M6 9C7 10 8 12 8 13" fill="none" stroke="#444"/></svg><i class="caret gray"></i></span>
      <span class="sb s3"><svg viewBox="0 0 16 16"><path d="M0 5.500H7M3.500 2V9" stroke="#444"/><rect x="6" y="9" width="9" height="4" fill="#444"/></svg><i class="caret gray"></i></span>
      <span class="sb st wa">跨图层选择</span>
      <span class="sb st wb">折线选择</span>
    </div>
    <span class="hint">选择钢筋线,按右键确定</span>
    <span class="fps">1000 FPS</span>
  </footer>
  <div class="task"><i class="tk-y"></i><i class="tk-l"></i><span class="clock">16:05</span></div>
  <div class="meter"></div>
</div>
</body>
</html>
```

FILE: styles.css
```css
*{box-sizing:border-box}
html,body{margin:0;padding:0}
body{width:1920px;height:1048px;overflow:hidden;background:#fff;font:12px/14px "Noto Sans CJK SC","Liberation Sans",sans-serif;color:#222}
i{display:block;font-style:normal}
.defs{display:none}
.app{position:relative;width:1920px;height:1048px;display:flex;flex-direction:column;overflow:hidden}

/* carets */
.caret{width:0;height:0;border-left:4px solid transparent;border-right:4px solid transparent;border-top:4px solid #666;flex:none}
.caret.dark{border-top-color:#555}
.caret.pale{border-top-color:#c4c6c8}
.caret.white{border-top-color:#fff;border-left-width:5px;border-right-width:5px;border-top-width:5px}
.caret.gray{border-top-color:#777}

/* title bar */
.top{height:42px;display:flex;border-bottom:1px solid #d0d0d0;flex:none}
.logo-cell{width:46px;padding:8px 0 0 9px;flex:none}
.logo{width:28px;height:28px;display:block}
.top-main{flex:1;display:flex;flex-direction:column;min-width:0}
.title-row{height:23px;display:flex;align-items:flex-start}
.qat{width:715px;flex:none;display:flex;align-items:center;gap:8px;padding:3px 0 0 9px;height:20px}
.qat .caret{margin:0 -3px 0 -5px}
.qi{width:15px;height:15px;flex:none}
.qmore{width:8px;height:8px;margin-left:-5px}
.app-title{width:397px;white-space:nowrap;padding-top:3px;flex:none;color:#222;letter-spacing:.33px}
.winctl{margin-left:auto;display:flex;gap:24px;padding:4px 12px 0 0}
.wc{width:13px;height:13px}
.tab-row{height:18px;display:flex;justify-content:space-between;align-items:flex-start;flex:none}
.tabs{display:flex;padding-left:4px}
.tab{padding:2px 13px 2px;height:18px;white-space:nowrap;color:#222}
.tab.active{background:#5aa7f5;color:#fff;border-radius:2px 2px 0 0}
.user-tools{display:flex;align-items:center;gap:6px;height:18px}
.search{width:245px;height:17px;border:1px solid #ccc;display:flex;align-items:center;justify-content:space-between;padding:0 6px 0 2px;margin-right:1px;background:#fff}
.ph{color:#b4b4b4;white-space:nowrap}
.sico{width:11px;height:11px}
.ut{width:15px;height:15px;flex:none;margin:0 1px}
.avatar{width:16px;height:16px}
.help{font-size:15px;color:#777;margin-left:2px}
.user-tools .caret{border-left-width:3px;border-right-width:3px;border-top-width:3px;margin-left:-4px}
.shirt{margin:0 4px 0 6px}

/* ribbon */
.ribbon{height:97px;flex:none;display:flex;background:linear-gradient(#fff 0,#fff 48px,#e9ebed 100%)}
.grp{display:flex;flex-direction:column;border-right:1px solid #ccced0;margin:2px 0 3px;padding:6px 0 0 11px;position:relative}
.g1{width:153px}.g2{width:152px}.g3{width:198px}.g4{width:82px}.g5{width:79px}.g6{width:69px}.g7{width:59px}
.items{display:flex;gap:10px}
.items.wide{gap:12px}
.item{display:flex;flex-direction:column;align-items:center;white-space:nowrap}
.item span{margin-top:4px}
.ric{width:30px;height:30px;display:block}
.item.off span{color:#b8babc}
.gl{margin-top:auto;padding-bottom:1px;text-align:center;margin-left:-11px;color:#333}

/* combos */
.combos{height:30px;flex:none;display:flex;gap:6px;padding:3px 0 0 3px;background:#c8cacd;border-top:1px solid #8d8f92;border-bottom:1px solid #8d8f92}
.combo{width:99px;height:23px;background:#fff;border:1px solid #b3b5b8;display:flex;align-items:center;justify-content:space-between;padding:0 5px 0 3px;white-space:nowrap}

/* main */
.main{height:841px;flex:none;display:flex;background:#fff}
.side{width:170px;flex:none;border-right:1px solid #c4c5c9;border-bottom:1px solid #c4c5c9;border-left:1px solid #c4c5c9;display:flex;flex-direction:column}
.side-bar{height:28px;flex:none;background:#eee;border-bottom:1px solid #c4c5c9;display:flex;align-items:center;padding:0 3px 0 6px;gap:4px}
.spark{width:13px;height:11px;margin-right:auto}
.vbtn{width:25px;height:24px;border:1px solid #79b4f2;border-radius:4px;background:#eaf3fd;display:flex;align-items:center;justify-content:center}
.vbtn svg{width:16px;height:16px}
.side-tree{padding-top:1.500px}
.nd{height:21px;margin:3px 0;display:flex;align-items:center;gap:5px;padding-left:5px;white-space:nowrap}
.fo{width:14px;height:12px;flex:none}
.nd.sub{margin-left:20px;padding-left:4px;gap:6px}
.nd.sel{background:#c6d8f0}
.ti{width:16px;height:16px;flex:none}
.gap{width:4px;flex:none}

/* middle panes */
.mid{width:298px;flex:none;display:flex;flex-direction:column;gap:5px}
.pane{border:1px solid #c4c5c9;background:#fff;display:flex;flex-direction:column}
.pane-top{height:332px}
.pane-bot{height:504px}
.pane-head{height:12px;flex:none;background:#d3d4d8;display:flex;justify-content:flex-end;align-items:center;padding-right:5px}
.pane .pane-head{height:11px;padding-right:4px}
.xi{width:8px;height:8px;fill:none;stroke:#777;stroke-width:1.600}
.xi.lite{stroke:#c8d4e0}
.ptabs{height:21px;flex:none;display:flex;background:#eee;border-bottom:1px solid #d4d4d6}
.ptab{width:65px;background:#dcdcdc;color:#888;text-align:center;line-height:21px;border-right:1px solid #cfcfcf;font-size:12px}
.ptab.on{background:#eee;color:#222;font-weight:700}
.ptool{height:30px;flex:none;background:#eee;display:flex;align-items:center;white-space:nowrap}
.pt{display:flex;align-items:center;gap:5px}
.pi{width:15px;height:15px;flex:none}
.p-new{margin-left:4px;width:68px}
.p-new .caret{margin-left:6px;border-left-width:3px;border-right-width:3px;border-top-width:3px}
.p-del{width:57px}
.p-copy{width:57px}
.p-floor{width:100px}
.more{margin-left:auto;margin-right:2px;width:10px;height:8px}
.psearch{height:19px;flex:none;background:#fff;border-bottom:1px solid #c4c5c9;display:flex;align-items:center;justify-content:space-between;padding:0 6px 0 3px}
.sico2{width:12px;height:12px}
.lh{height:21px;display:flex;align-items:center;padding-left:10px;gap:4px}
.tri{width:0;height:0;border-right:6px solid #444;border-top:6px solid transparent;margin-right:4px}
.li{height:21px;line-height:21px;margin-left:40px;width:107px;padding-left:4px;white-space:nowrap}
.li.sel{background:#c6d8f0}
.layerbar{height:30px;flex:none;background:#eee;display:flex;align-items:center;gap:14px;padding-left:4px;border-bottom:1px solid #d4d4d6}
.lrow{display:flex;height:21px}
.lhead{background:#eee;height:22px}
.lhead span{border-bottom:1px solid #d4d4d6}
.c1,.c2,.c3{display:flex;align-items:center;justify-content:center;border-right:1px solid #c8c9cd;border-bottom:1px solid #c8c9cd;white-space:nowrap}
.c1{width:50px}.c2{width:37px}.c3{width:151px}
.tl{justify-content:flex-start;padding-left:4px;word-spacing:2px}
.play{width:0;height:0;border-left:6px solid #bbb;border-top:5px solid transparent;border-bottom:5px solid transparent}

/* splitters */
.split{width:4px;flex:none;background:#fff}
.split i{width:4px;height:100px;background:#676b70;margin-top:371px}

/* canvas */
.canvas{width:1173px;flex:none;position:relative;overflow:hidden}
.draw{display:block;width:1173px;height:841px;shape-rendering:crispEdges}
.draw text{shape-rendering:auto}
.rd path,.wh path,.gl1,.yl path{fill:none}
.rd path{stroke:#f00;stroke-width:1}
.wh path{stroke:#fff;stroke-width:1}
.gl1{stroke:#0a8a0a;stroke-width:1}
.yl path{stroke:#ff0;stroke-width:3.500}
.arrows path{fill:#000;shape-rendering:auto}
.box rect{fill:none;stroke:#fa3a3a;stroke-width:7}
.cad text{font:100 39px Roboto,"Liberation Sans",sans-serif;fill:#08b4bc}
.cad.lime text{fill:#22ee22}
.axc circle{fill:none;stroke:#0a8a0a;stroke-width:1;shape-rendering:auto}
.axt text{font:18px "Liberation Sans",sans-serif;fill:#fff;text-anchor:middle}
.viewbar{position:absolute;top:0;right:0;width:32px;height:238px;background:#4d4f51;border-radius:0 0 4px 4px}
.vb-svg{display:block;width:32px;height:238px;overflow:visible}
.cube path,.cube rect{fill:#3e4852;stroke:#23282e;stroke-width:1}
.cube path[fill=none]{fill:none}
.cube path[stroke]{stroke:#9aa2a9;fill:none}
.cube.glass path{fill:#5c6874}
.cube.glass path[fill=none]{fill:none}
.t3d{font:9px "Liberation Sans",sans-serif;fill:#23282e;text-anchor:middle}
.ecirc{fill:none;stroke:#0a8a0a}
.etxt{font:18px "Liberation Sans",sans-serif;fill:#ddd;text-anchor:middle}

/* blue floating panel */
.floatp{position:absolute;left:0;top:0;width:134px;height:116px;background:#1f4b7d;border:1px solid #234f80;display:flex;flex-direction:column;align-items:center;gap:7px}
.fh{width:100%;height:12px;background:#163a62;display:flex;justify-content:flex-end;align-items:center;padding-right:4px;margin-bottom:-1px}
.fb{width:120px;height:25px;background:#20527f;border:1px solid #193c62;border-radius:3px;color:#fff;font-size:12px;display:flex;align-items:center;justify-content:center;position:relative}
.fb .caret{position:absolute;right:6px;top:10px}
.fb span{margin-right:4px}

/* dialog */
.dlg{position:absolute;left:0;top:317px;width:245px;height:233px;background:#eee;border:1px solid #cfd3d8;border-top:0;display:flex;flex-direction:column}
.dh{height:27px;flex:none;background:#2b7fde;color:#fff;display:flex;align-items:center;justify-content:space-between;padding:0 10px 0 8px;margin:0 -1px}
.dx{width:9px;height:9px}
.db{padding-top:12px;display:flex;flex-direction:column;gap:6px}
.dr{display:flex;height:24px;align-items:center}
.dr label{width:87px;flex:none;padding-left:12px;white-space:nowrap;color:#222}
.dr label.req{padding-left:7px;color:#2a6ee0}
.req em{font-style:normal;color:#f01818}
.fld{width:145px;height:24px;background:#fff;border:1px solid #adadad;display:flex;align-items:center;justify-content:space-between;padding:0 3px 0 6px;white-space:nowrap}
.fld .caret{border-left-width:3px;border-right-width:3px;border-top-width:3px}
.fld.dim{background:#eee;color:#999}
.fld.tight{padding-left:3px}
.dbtns{display:flex;justify-content:flex-end;gap:6px;padding-right:12px;margin-top:5px}
.btn{height:26px;width:78px;border:1px solid #d0d5de;border-radius:3px;background:#f7f8fa;display:flex;align-items:center;justify-content:center;color:#333}
.btn.no{background:#e2e3e5;color:#999;border-color:#c8ccd2}

/* right panel */
.right{width:267px;flex:none;background:#eee;border-left:1px solid #c4c5c9;border-bottom:1px solid #c4c5c9;display:flex;flex-direction:column}
.rt-title{height:22px;flex:none;padding:3px 0 0 9px;border-bottom:1px solid #d4d4d6;color:#555;font-size:12px;line-height:16px}
.rt-tabs{height:29px;flex:none;padding:4px 0 0 3px;display:flex;gap:3px;align-items:flex-end;border-bottom:1px solid #d4d4d6}
.rtab{width:60px;height:22px;background:#dcdcdc;text-align:center;line-height:22px;color:#555;border-radius:3px 3px 0 0}
.rtab.on{height:25px;line-height:25px;background:#fff;color:#3d8ae0;border:1px solid #d4d4d6;border-bottom:0}
.rt-body{display:flex;margin:4px 0 0 3px;height:734px;flex:none}
.tbl{width:245px;flex:none;background:#fff;overflow:hidden;border-left:1px solid #c4c5c9}
.r{display:flex;height:21px;border-bottom:1px solid #c6c7cb}
.r.rh{height:20px;background:#eee;text-align:center}
.rh .c0,.rh .ck{justify-content:center;align-items:center;display:flex}
.c0{width:118px;flex:none;display:flex;align-items:center;border-right:1px solid #c6c7cb;white-space:nowrap;background-repeat:no-repeat}
.ck{width:63px;flex:none;display:flex;align-items:center;justify-content:center;border-right:1px solid #c6c7cb}
.ex{width:14px;height:14px;border:1px solid #bdbdc0;border-radius:2px;background:#f1f1f2;margin-right:6px;flex:none;position:relative}
.ex::after{content:"";position:absolute;left:3px;top:5.500px;width:6px;height:1px;background:#222}
.l0{padding-left:1px}
.l1{padding-left:11px;background-image:linear-gradient(#c4c4c8,#c4c4c8),linear-gradient(#c4c4c8,#c4c4c8);background-position:8px 0,19px 17px;background-size:1px 100%,1px 4px}
.l0.first{background-image:linear-gradient(#c4c4c8,#c4c4c8);background-position:8px 17px;background-size:1px 4px}
.l2{padding-left:41px;background-image:linear-gradient(#c4c4c8,#c4c4c8),linear-gradient(#c4c4c8,#c4c4c8),linear-gradient(#c4c4c8,#c4c4c8);background-position:8px 0,18px 0,19px 10px;background-size:1px 100%,1px 100%,17px 1px}
.l2.end{background-size:1px 100%,1px 11px,17px 1px}
.cb{width:14px;height:14px;border:1px solid #8e8e90;border-radius:3px;background:#fff;position:relative;flex:none}
.cb.on{background:#5aa5f5;border-color:#5aa5f5}
.cb.on::after{content:"";position:absolute;left:3px;top:2px;width:6px;height:4px;border-left:2px solid #fff;border-bottom:2px solid #fff;transform:rotate(-45deg)}
.cb.part::after{content:"";position:absolute;left:1px;top:1px;width:10px;height:10px;background:#9cc6f9;border:1px solid #6ea8ef;border-radius:2px}
.cb.dis{background:#eee;border-color:#b6b6b8}
.scroll{width:13px;flex:none;display:flex;flex-direction:column;align-items:center;background:#fff}
.up{width:0;height:0;border-left:4px solid transparent;border-right:4px solid transparent;border-bottom:4px solid #333;margin-top:3px}
.thumb{width:8px;height:355px;background:#c6c6c8;border-radius:4px;margin-top:2px}
.down{width:0;height:0;border-left:4px solid transparent;border-right:4px solid transparent;border-top:4px solid #333;margin-top:auto;margin-bottom:1px}
.rt-foot{display:flex;justify-content:flex-end;padding:6px 11px 0 0}
.btn.reset{width:87px;height:25px;color:#555}

/* status */
.status{height:29px;flex:none;background:#dcdcdf;display:grid;grid-template-columns:203px 40px 43px 133px 103px 40px 38px auto auto 1fr;align-items:center;padding-left:2px;color:#333;white-space:nowrap}
.coords{letter-spacing:.8px}
.sbtns{display:flex;gap:3px;padding-left:2px;align-items:center}
.sb{height:24px;background:#ccc;border:1px solid #9c9c9c;display:flex;align-items:center;justify-content:center;color:#555}
.sb svg{width:16px;height:16px;flex:none}
.s1{width:25px}
.s2{width:36px;background:#fff;border-color:#3d92ee;justify-content:flex-start;gap:4px;padding-left:3px}
.s2 .caret{border-left-width:3px;border-right-width:3px;border-top-width:3px;margin-left:1px}
.s3{width:36px;gap:3px;justify-content:flex-start;padding-left:3px}
.s3 .caret{border-left-width:3px;border-right-width:3px;border-top-width:3px}
.dimmed{opacity:.75}
.wa{width:73px}.wb{width:61px}
.hint{padding-left:3px;color:#444}
.fps{justify-self:end;padding-right:30px;color:#444}

/* taskbar */
.task{height:9px;flex:none;border-top:1px solid #fff;background:#06090f;display:flex;overflow:hidden}
.tk-y{width:6px;height:3px;background:#e8b33a;margin-left:127px}
.tk-l{width:48px;height:9px;background:#33363b;margin-left:212px}
.clock{margin-left:auto;margin-right:78px;color:#fff;font-size:11px;line-height:14px;margin-top:2px}
.meter{position:absolute;left:1910px;top:968px;width:14px;height:58px;background:linear-gradient(90deg,#4b4d50 0,#4b4d50 3px,#7fb8a0 3px,#b9c46a 5px,#4b4d50 5px);border-radius:4px 0 0 4px}
```
